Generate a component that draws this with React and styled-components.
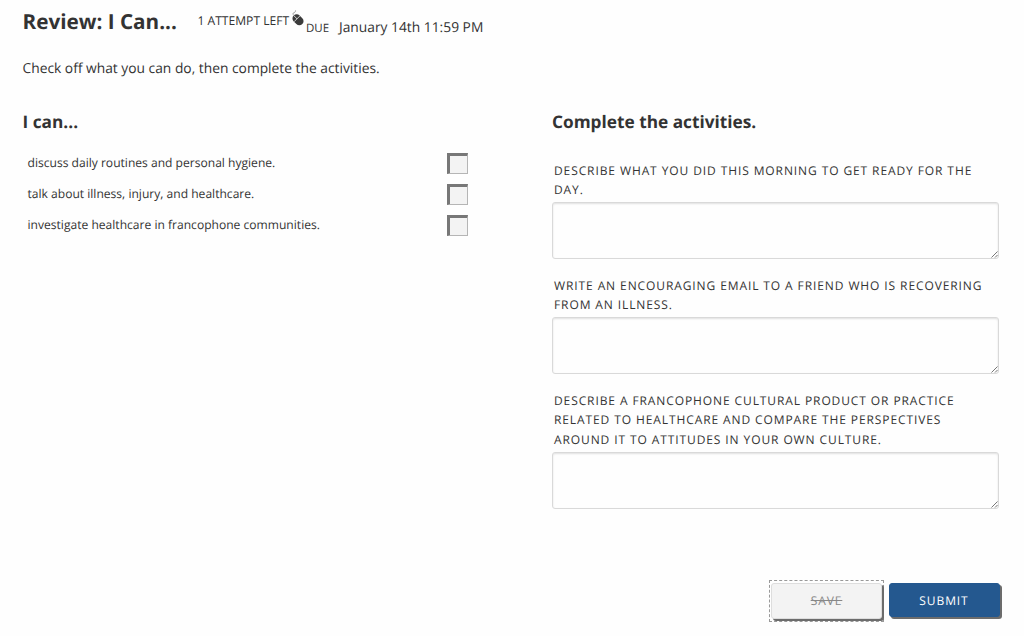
import React, { useState } from "react";
import styled, { createGlobalStyle } from "styled-components";

const GlobalStyle = createGlobalStyle`
  * {
    box-sizing: border-box;
  }

  body {
    margin: 0;
    background: #fefefe;
    color: #333;
    font-family: "Open Sans", "Noto Sans", sans-serif;
    text-rendering: geometricPrecision;
  }
`;

const Page = styled.main`
  display: flex;
  flex-direction: column;
  width: 1024px;
  height: 636px;
  padding: 6px 23px 14px 22.5px;
`;

const Header = styled.header`
  display: flex;
  height: 48px;
  white-space: nowrap;
`;

const Title = styled.h1`
  width: 175px;
  margin: 0;
  font-size: 20.7px;
  line-height: 32px;
  font-weight: 700;
`;

const Attempts = styled.span`
  width: 94px;
  font-size: 12.1px;
  line-height: 29px;
`;

const MouseIcon = styled.svg`
  width: 12px;
  height: 16px;
  margin-top: 4px;
`;

const DueLabel = styled.span`
  width: 33px;
  margin-left: 2.5px;
  font-size: 11.5px;
  line-height: 46px;
`;

const DueDate = styled.span`
  font-size: 13.8px;
  line-height: 43px;
`;

const Intro = styled.p`
  height: 54px;
  margin: 0;
  font-size: 13.8px;
  line-height: 29px;
`;

const Columns = styled.div`
  display: grid;
  grid-template-columns: 529.5px 447px;
  flex: 1;
`;

const Heading = styled.h2`
  margin: 0;
  font-size: 17.25px;
  line-height: 30px;
  font-weight: 700;
`;

const GoalList = styled.ul`
  margin: 15px 0 0;
  padding: 0 0 0 5px;
  list-style: none;
`;

const Goal = styled.li`
  height: 31px;

  label {
    display: grid;
    grid-template-columns: 419.5px 21px;
    font-size: 12.08px;
    line-height: 20px;
  }
`;

const Checkbox = styled.input`
  appearance: none;
  width: 21px;
  height: 21px;
  margin: 0;
  border: 1px solid #b5b5b5;
  border-top: 3px solid #777;
  border-left: 3px solid #777;
  background: #f3f3f3;

  &:checked {
    background: #777;
  }
`;

const ActivityList = styled.div`
  display: grid;
  gap: 17px;
  margin-top: 23px;
`;

const Prompt = styled.label`
  display: block;
  padding: 0 0 3px 2px;
  font-size: 12px;
  line-height: 19.1px;
  letter-spacing: 0.9px;
  text-transform: uppercase;
  white-space: pre-line;
`;

const AnswerBox = styled.div`
  position: relative;
  height: 57px;
`;

const Answer = styled.textarea`
  display: block;
  width: 447px;
  height: 57px;
  padding: 6px;
  border: 1px solid #d9d9d9;
  border-radius: 3px;
  background: #fefefe;
  box-shadow: inset 0 1px 2px rgba(0, 0, 0, 0.12);
  color: #333;
  font: inherit;
  resize: none;
  outline: none;
`;

const Grip = styled.svg`
  position: absolute;
  right: 1px;
  bottom: 1px;
  width: 7px;
  height: 7px;
`;

const Actions = styled.footer`
  display: flex;
  justify-content: flex-end;
  gap: 5px;
  height: 42px;
`;

const SaveFrame = styled.div`
  width: 115px;
  height: 42px;
  padding: 2px 1px;
  border: 1px dashed #999;
`;

const Button = styled.button`
  display: block;
  width: 111px;
  height: ${(props) => (props.$primary ? "34px" : "36px")};
  padding: ${(props) => (props.$primary ? "1px 1px 0 0" : "0 0 1px")};
  border: 1px solid ${(props) => (props.$primary ? "#24588f" : "#ddd")};
  border-radius: 3px;
  background: ${(props) => (props.$primary ? "#24588f" : "#f3f3f3")};
  box-shadow: 2px 2px 0 #6c6c6c;
  color: ${(props) => (props.$primary ? "#fff" : "#888")};
  font-family: inherit;
  font-size: 12px;
  font-weight: ${(props) => (props.$primary ? 500 : 400)};
  letter-spacing: 0.91px;
  text-decoration: ${(props) => (props.$primary ? "none" : "line-through")};
  text-rendering: inherit;
  text-transform: uppercase;
`;

const SubmitWrap = styled.div`
  padding: 3px 1px 0 0;
`;

const goals = [
  "discuss daily routines and personal hygiene.",
  "talk about illness, injury, and healthcare.",
  "investigate healthcare in francophone communities.",
];

const activities = [
  "Describe what you did this morning to get ready for the\nday.",
  "Write an encouraging email to a friend who is recovering\nfrom an illness.",
  "Describe a francophone cultural product or practice\nrelated to healthcare and compare the perspectives\naround it to attitudes in your own culture.",
];

const App = () => {
  const [answers, setAnswers] = useState(["", "", ""]);

  return (
    <Page>
      <GlobalStyle />
      <Header>
        <Title>Review: I Can...</Title>
        <Attempts>1 ATTEMPT LEFT</Attempts>
        <MouseIcon viewBox="0 0 12 16">
          <path d="M2 5.5C.6 4.3 .8 2.9 1.8 2.8C3 2.7 3.4 1.6 3.6 .4" fill="none" stroke="#888" strokeWidth=".8" />
          <g transform="rotate(-45 6 9.8)">
            <rect x="1.8" y="3.7" width="8.4" height="12.2" rx="4.2" fill="#3b3b3b" />
            <path d="M1.8 8.4H10.2M6 3.7V8.4" stroke="#fefefe" strokeWidth=".7" />
          </g>
        </MouseIcon>
        <DueLabel>DUE</DueLabel>
        <DueDate>January 14th 11:59 PM</DueDate>
      </Header>
      <Intro>Check off what you can do, then complete the activities.</Intro>
      <Columns>
        <section>
          <Heading>I can...</Heading>
          <GoalList>
            {goals.map((goal) => (
              <Goal key={goal}>
                <label>
                  {goal}
                  <Checkbox type="checkbox" />
                </label>
              </Goal>
            ))}
          </GoalList>
        </section>
        <section>
          <Heading>Complete the activities.</Heading>
          <ActivityList>
            {activities.map((activity, i) => (
              <div key={activity}>
                <Prompt htmlFor={`answer-${i}`}>{activity}</Prompt>
                <AnswerBox>
                  <Answer
                    id={`answer-${i}`}
                    value={answers[i]}
                    onChange={(e) => updateAnswer(i, e.target.value)}
                  />
                  <Grip viewBox="0 0 7 7">
                    <path d="M.5 6.5L6.5 .5M4 6.5L6.5 4" stroke="#666" strokeWidth=".9" />
                  </Grip>
                </AnswerBox>
              </div>
            ))}
          </ActivityList>
        </section>
      </Columns>
      <Actions>
        <SaveFrame>
          <Button type="button" disabled>Save</Button>
        </SaveFrame>
        <SubmitWrap>
          <Button type="submit" $primary>Submit</Button>
        </SubmitWrap>
      </Actions>
    </Page>
  );

  function updateAnswer(index, value) {
    setAnswers(answers.map((answer, i) => (i === index ? value : answer)));
  }
};

export default App;
